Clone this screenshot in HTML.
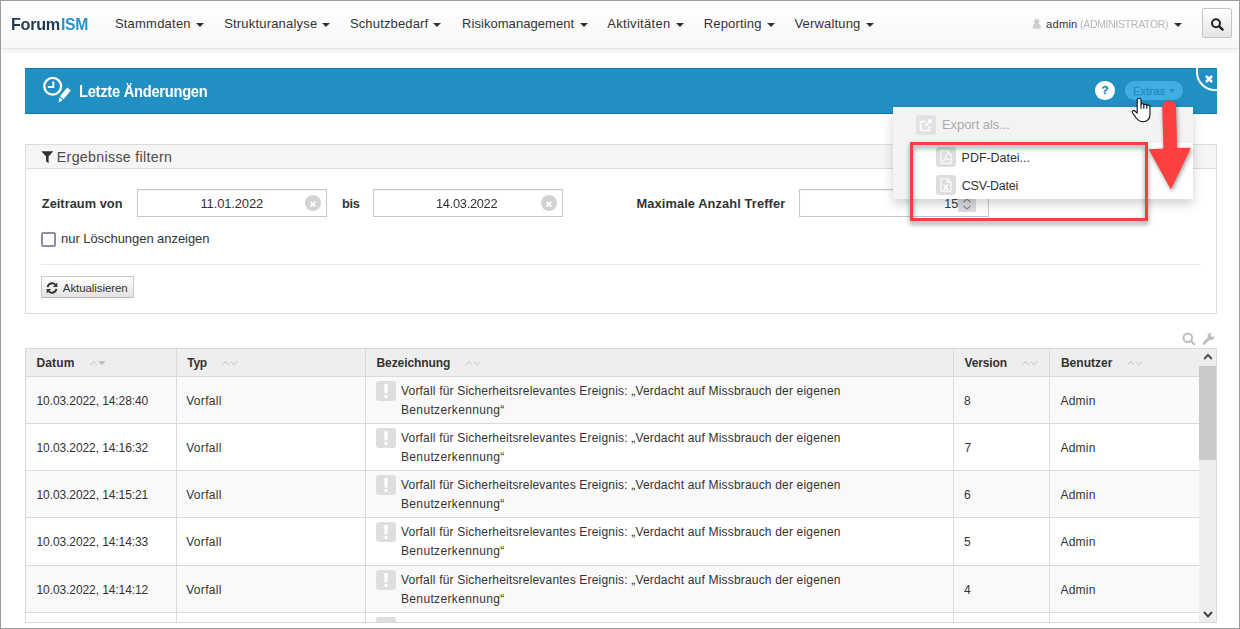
<!DOCTYPE html>
<html lang="de">
<head>
<meta charset="utf-8">
<title>ForumISM - Letzte Änderungen</title>
<style>
*{box-sizing:border-box;margin:0;padding:0}
html,body{width:1240px;height:629px;overflow:hidden;background:#fff}
body{font-family:"Liberation Sans",sans-serif;font-size:13px;color:#333;position:relative}
.a{position:absolute}
.t{position:absolute;white-space:nowrap;display:block}
svg{position:absolute;overflow:visible}
#frame{position:absolute;left:0;top:0;width:1240px;height:629px;border:1px solid #9b9b9b;z-index:100;pointer-events:none}
#nav{position:absolute;left:0;top:0;width:1240px;height:49px;background:linear-gradient(#ffffff,#f7f7f7);border-bottom:1px solid #e3e3e3;box-shadow:0 2px 5px rgba(0,0,0,.07)}
.caret{position:absolute;width:0;height:0;border-left:4px solid transparent;border-right:4px solid transparent;border-top:4px solid #333;top:23px}
#sbtn{position:absolute;left:1202px;top:8px;width:30px;height:30px;border:1px solid #c4c4c4;border-radius:2px;background:linear-gradient(#ffffff,#e4e4e4)}
#hdr{position:absolute;left:25px;top:68px;width:1192px;height:46px;background:#2090c2;border-top:1px solid #127aad;border-bottom:1px solid #127aad}
#closec{position:absolute;left:1196px;top:66px;width:24px;height:25px;border:2px solid #fff;border-radius:0 0 0 18px}
#help{position:absolute;left:1095px;top:81px;width:20px;height:19px;border-radius:10px;background:#fff}
#pill{position:absolute;left:1125px;top:81px;width:58px;height:19px;border-radius:10px;background:#3faee0}
#panel{position:absolute;left:25px;top:144px;width:1192px;height:170px;border:1px solid #dcdcdc;background:#fff}
#phead{position:absolute;left:0;top:0;width:1190px;height:24px;background:#f5f5f5;border-bottom:1px solid #dcdcdc}
.inp{position:absolute;top:189px;width:190px;height:28px;border:1px solid #c8c8c8;background:#fff;box-shadow:inset 0 1px 1px rgba(0,0,0,.06)}
.clr{position:absolute;top:195px;width:16px;height:16px;border-radius:50%;background:#d3d3d3}
#hr{position:absolute;left:41px;top:264px;width:1160px;height:1px;background:#e9e9e9}
#btn{position:absolute;left:41px;top:276px;width:93px;height:22px;border:1px solid #c9c9c9;border-bottom-color:#b9b9b9;border-radius:1px;background:linear-gradient(#ffffff,#e2e2e2)}
#cb{position:absolute;left:41px;top:232px;width:15px;height:15px;border:2px solid #8d8da3;border-radius:2px;background:#fff}
#tbl{position:absolute;left:25px;top:348px;width:1192px;height:275px;border:1px solid #dadada;background:#fff;overflow:hidden}
.th{position:absolute;top:0;height:28px;background:#eeeeee;border-right:1px solid #dadada;border-bottom:1px solid #dadada}
.row{position:absolute;left:0;width:1174px;border-bottom:1px solid #dadada;background:#fff}
.row.odd{background:#f9f9f9}
.vl{position:absolute;top:0;width:1px;height:275px;background:#dadada}
.ic{position:absolute;width:20px;height:20px;border-radius:3px;background:#dedede}
#dd{position:absolute;left:893px;top:107px;width:300px;height:92px;background:#f3f3f3;box-shadow:0 5px 10px rgba(0,0,0,.18)}
#ddh{position:absolute;left:0;top:0;width:300px;height:36px;background:#f3f3f3}
#red{position:absolute;left:910px;top:142px;width:238px;height:79px;border:3.4px solid #f83f3f;filter:drop-shadow(0 3px 2.5px rgba(0,0,0,.45))}
</style>
</head>
<body>
<!-- navbar -->
<div id="nav"></div>
<div class="caret" style="left:196px"></div>
<div class="caret" style="left:322px"></div>
<div class="caret" style="left:433px"></div>
<div class="caret" style="left:580px"></div>
<div class="caret" style="left:676px"></div>
<div class="caret" style="left:767px"></div>
<div class="caret" style="left:866px"></div>
<div class="caret" style="left:1174px;top:23px"></div>
<svg style="left:1032px;top:19px" width="10" height="10" viewBox="0 0 10 10"><circle cx="4.7" cy="2.7" r="2.6" fill="#cfcfcf"/><path d="M0.7 9.7 V7.2 C0.7 5.6 1.8 5 3.2 5 H6.2 C7.6 5 8.7 5.6 8.7 7.2 V9.7 Z" fill="#cfcfcf"/></svg>
<div id="sbtn"></div>
<svg style="left:1210px;top:17px" width="15" height="14" viewBox="0 0 15 14"><circle cx="6" cy="6.2" r="4" fill="none" stroke="#222" stroke-width="2"/><path d="M9 9.2 L12.6 12.6" stroke="#222" stroke-width="2.4" stroke-linecap="round"/></svg>

<!-- header bar -->
<div id="hdr"></div>
<svg style="left:40px;top:74px" width="36" height="32" viewBox="0 0 36 32">
<circle cx="12.7" cy="12.3" r="8.4" fill="none" stroke="#fff" stroke-width="2.3"/>
<path d="M13.3 7.4 V13 H7.8" fill="none" stroke="#fff" stroke-width="2"/>
<path d="M27.2 13.6 L30.8 16.6 L23.6 25.2 L20 22.2 Z" fill="#fff"/>
<path d="M19.3 23.2 L22.7 26 L18.6 28.6 Z" fill="#fff"/>
</svg>
<div id="help"></div>
<div id="pill"></div>
<div class="a" style="left:1169px;top:89px;width:0;height:0;border-left:3.5px solid transparent;border-right:3.5px solid transparent;border-top:4px solid #2492c8"></div>
<div class="a" style="left:1190px;top:60px;width:27px;height:40px;overflow:hidden"><div class="a" style="left:6px;top:6px;width:30px;height:25px;border:2px solid #fff;border-radius:0 0 0 19px"></div></div>
<svg style="left:1204px;top:74px" width="10" height="10" viewBox="0 0 10 10"><path d="M2 2 L8 8 M8 2 L2 8" stroke="#fff" stroke-width="2.6" stroke-linecap="butt"/></svg>

<!-- filter panel -->
<div id="panel"><div id="phead"></div></div>
<svg style="left:41px;top:151px" width="13" height="13" viewBox="0 0 13 13"><path d="M0.3 0.3 H12.3 L7.6 5.6 V12.3 L5 10.2 V5.6 Z" fill="#333"/></svg>
<div class="inp" style="left:137px"></div>
<div class="inp" style="left:373px"></div>
<div class="inp" style="left:799px"></div>
<div class="clr" style="left:305px"></div>
<svg style="left:309px;top:200px" width="8" height="8" viewBox="0 0 8 8"><path d="M1.6 1.8 L6.4 6.6 M6.4 1.8 L1.6 6.6" stroke="#fff" stroke-width="1.7"/></svg>
<div class="clr" style="left:541px"></div>
<svg style="left:545px;top:200px" width="8" height="8" viewBox="0 0 8 8"><path d="M1.6 1.8 L6.4 6.6 M6.4 1.8 L1.6 6.6" stroke="#fff" stroke-width="1.7"/></svg>
<div class="a" style="left:958px;top:190px;width:18px;height:22px;background:#dbdbe0"></div>
<svg style="left:961px;top:197px" width="12" height="14" viewBox="0 0 12 14"><path d="M2.5 5 L6 2 L9.5 5 M2.5 9 L6 12 L9.5 9" fill="none" stroke="#858596" stroke-width="1.2"/></svg>
<div id="cb"></div>
<div id="hr"></div>
<div id="btn"></div>
<svg style="left:46px;top:282px" width="12" height="12" viewBox="0 0 12 12">
<path d="M1.6 5.2 A4.5 4.5 0 0 1 9.4 2.8" fill="none" stroke="#333" stroke-width="1.9"/>
<path d="M11.3 0.6 V5 H6.9 Z" fill="#333"/>
<path d="M10.4 6.8 A4.5 4.5 0 0 1 2.6 9.2" fill="none" stroke="#333" stroke-width="1.9"/>
<path d="M0.7 11.4 V7 H5.1 Z" fill="#333"/>
</svg>

<!-- table tools -->
<svg style="left:1182px;top:332px" width="14" height="14" viewBox="0 0 14 14"><circle cx="5.8" cy="5.7" r="4.3" fill="none" stroke="#bdbdbd" stroke-width="2"/><path d="M9.2 9.2 L12.2 12.2" stroke="#bdbdbd" stroke-width="2.2" stroke-linecap="round"/></svg>
<svg style="left:1202px;top:332px" width="14" height="14" viewBox="0 0 14 14"><path d="M2.1 11.3 L7.8 5.6" stroke="#bdbdbd" stroke-width="3" stroke-linecap="round"/><path d="M12.6 3.9 A3.6 3.6 0 1 1 9.5 0.8 L8.3 3.3 L10.2 5.2 Z" fill="#bdbdbd"/></svg>

<!-- table -->
<div id="tbl">
<div class="th" style="left:0;width:151px"></div>
<div class="th" style="left:151px;width:189px"></div>
<div class="th" style="left:340px;width:588px"></div>
<div class="th" style="left:928px;width:96px"></div>
<div class="th" style="left:1024px;width:150px;border-right:none"></div>
<div class="row odd" style="top:28px;height:47px"></div>
<div class="row" style="top:75px;height:47px"></div>
<div class="row odd" style="top:122px;height:47px"></div>
<div class="row" style="top:169px;height:48px"></div>
<div class="row odd" style="top:217px;height:47px"></div>
<div class="row" style="top:264px;height:47px"></div>
<div class="vl" style="left:150px"></div>
<div class="vl" style="left:339px"></div>
<div class="vl" style="left:927px"></div>
<div class="vl" style="left:1023px"></div>
<div class="a" style="left:1173px;top:0;width:18px;height:275px;background:#eeeeee"></div>
<div class="a" style="left:1173px;top:17px;width:18px;height:94px;background:#c9c9c9"></div>
<svg style="left:1177px;top:4px" width="10" height="7" viewBox="0 0 10 7"><path d="M1.2 6 L5 1.8 L8.8 6" fill="none" stroke="#4a4a4a" stroke-width="1.9"/></svg>
<svg style="left:1177px;top:262px" width="10" height="7" viewBox="0 0 10 7"><path d="M1 1 L5 5.4 L9 1" fill="none" stroke="#444" stroke-width="2"/></svg>
</div>
<svg style="left:89.6px;top:360px" width="17" height="7" viewBox="0 0 17 7"><path d="M0.4 4.9 L3.8 1.5 L7.2 4.9" fill="none" stroke="#d2d2d2" stroke-width="1.2"/><path d="M8.2 1.2 H15.6 L11.9 5.2 Z" fill="#bcbcbc"/></svg>
<svg style="left:222.3px;top:360px" width="17" height="7" viewBox="0 0 17 7"><path d="M0.4 4.9 L3.8 1.5 L7.2 4.9" fill="none" stroke="#d2d2d2" stroke-width="1.2"/><path d="M8.6 1.4 L12 4.8 L15.4 1.4" fill="none" stroke="#d2d2d2" stroke-width="1.2"/></svg>
<svg style="left:465.1px;top:360px" width="17" height="7" viewBox="0 0 17 7"><path d="M0.4 4.9 L3.8 1.5 L7.2 4.9" fill="none" stroke="#d2d2d2" stroke-width="1.2"/><path d="M8.6 1.4 L12 4.8 L15.4 1.4" fill="none" stroke="#d2d2d2" stroke-width="1.2"/></svg>
<svg style="left:1021.8px;top:360px" width="17" height="7" viewBox="0 0 17 7"><path d="M0.4 4.9 L3.8 1.5 L7.2 4.9" fill="none" stroke="#d2d2d2" stroke-width="1.2"/><path d="M8.6 1.4 L12 4.8 L15.4 1.4" fill="none" stroke="#d2d2d2" stroke-width="1.2"/></svg>
<svg style="left:1126.8px;top:360px" width="17" height="7" viewBox="0 0 17 7"><path d="M0.4 4.9 L3.8 1.5 L7.2 4.9" fill="none" stroke="#d2d2d2" stroke-width="1.2"/><path d="M8.6 1.4 L12 4.8 L15.4 1.4" fill="none" stroke="#d2d2d2" stroke-width="1.2"/></svg>
<div class="ic" style="left:376px;top:381px;height:20px;border-radius:3px"></div>
<svg style="left:383px;top:381px" width="6" height="20" viewBox="0 0 6 20"><path d="M1.1 3.2 H4.9 L4.3 12.4 H1.7 Z" fill="#fff"/><rect x="1.4" y="13.9" width="3.2" height="3.1" rx="0.8" fill="#fff"/></svg>
<div class="ic" style="left:376px;top:428px;height:20px;border-radius:3px"></div>
<svg style="left:383px;top:428px" width="6" height="20" viewBox="0 0 6 20"><path d="M1.1 3.2 H4.9 L4.3 12.4 H1.7 Z" fill="#fff"/><rect x="1.4" y="13.9" width="3.2" height="3.1" rx="0.8" fill="#fff"/></svg>
<div class="ic" style="left:376px;top:475px;height:20px;border-radius:3px"></div>
<svg style="left:383px;top:475px" width="6" height="20" viewBox="0 0 6 20"><path d="M1.1 3.2 H4.9 L4.3 12.4 H1.7 Z" fill="#fff"/><rect x="1.4" y="13.9" width="3.2" height="3.1" rx="0.8" fill="#fff"/></svg>
<div class="ic" style="left:376px;top:522px;height:20px;border-radius:3px"></div>
<svg style="left:383px;top:522px" width="6" height="20" viewBox="0 0 6 20"><path d="M1.1 3.2 H4.9 L4.3 12.4 H1.7 Z" fill="#fff"/><rect x="1.4" y="13.9" width="3.2" height="3.1" rx="0.8" fill="#fff"/></svg>
<div class="ic" style="left:376px;top:570px;height:20px;border-radius:3px"></div>
<svg style="left:383px;top:570px" width="6" height="20" viewBox="0 0 6 20"><path d="M1.1 3.2 H4.9 L4.3 12.4 H1.7 Z" fill="#fff"/><rect x="1.4" y="13.9" width="3.2" height="3.1" rx="0.8" fill="#fff"/></svg>
<div class="ic" style="left:376px;top:617px;height:5px;border-radius:3px 3px 0 0"></div>

<!-- dropdown -->
<div id="dd"><div id="ddh"></div><div class="a" style="left:18px;top:36px;width:282px;height:56px;background:#fff"></div></div>
<div class="ic" style="left:916px;top:115px;background:#e2e2e2"></div>
<svg style="left:919px;top:118px" width="14" height="14" viewBox="0 0 14 14"><path d="M10.5 8 V11.3 A1.2 1.2 0 0 1 9.3 12.5 H2.7 A1.2 1.2 0 0 1 1.5 11.3 V4.7 A1.2 1.2 0 0 1 2.7 3.5 H6.5" fill="none" stroke="#fff" stroke-width="1.5"/><path d="M8 1.2 H12.8 V6 L11 4.2 L7 8.2 L5.8 7 L9.8 3 Z" fill="#fff"/></svg>
<div class="ic" style="left:936px;top:147px"></div>
<svg style="left:940px;top:150px" width="12" height="14" viewBox="0 0 12 14"><path d="M1 0.7 H7.5 L11 4.2 V13.3 H1 Z M7.5 0.7 V4.2 H11" fill="none" stroke="#fff" stroke-width="1.1"/><path d="M2.6 11.2 C4.8 9.6 6 6.6 5.6 4.6 C5.2 6.8 7 9 9.6 9.4 C7 9.2 4.4 10 2.6 11.2 Z" fill="none" stroke="#fff" stroke-width="0.9"/></svg>
<div class="ic" style="left:936px;top:175px"></div>
<svg style="left:940px;top:178px" width="12" height="14" viewBox="0 0 12 14"><path d="M1 0.7 H7.5 L11 4.2 V13.3 H1 Z M7.5 0.7 V4.2 H11" fill="none" stroke="#fff" stroke-width="1.1"/><path d="M3.6 6.6 L8 12 M8 6.6 L3.6 12" fill="none" stroke="#fff" stroke-width="1.5"/></svg>

<span class="t" style="left:11.00px;top:14.91px;font-size:17px;line-height:20.40px;color:#1f3b50;letter-spacing:-0.300px;font-weight:bold;transform:scaleX(0.9517);transform-origin:0 50%;">Forum</span>
<span class="t" style="left:61.40px;top:14.91px;font-size:17px;line-height:20.40px;color:#2a93c9;letter-spacing:-0.300px;font-weight:bold;transform:scaleX(0.9252);transform-origin:0 50%;">ISM</span>
<span class="t" style="left:114.90px;top:15.70px;font-size:13px;line-height:15.60px;color:#333;letter-spacing:0.222px;">Stammdaten</span>
<span class="t" style="left:224.20px;top:15.70px;font-size:13px;line-height:15.60px;color:#333;letter-spacing:0.186px;">Strukturanalyse</span>
<span class="t" style="left:349.90px;top:15.70px;font-size:13px;line-height:15.60px;color:#333;letter-spacing:0.155px;">Schutzbedarf</span>
<span class="t" style="left:462.00px;top:15.70px;font-size:13px;line-height:15.60px;color:#333;letter-spacing:0.053px;">Risikomanagement</span>
<span class="t" style="left:607.20px;top:15.70px;font-size:13px;line-height:15.60px;color:#333;letter-spacing:0.310px;">Aktivitäten</span>
<span class="t" style="left:703.80px;top:15.70px;font-size:13px;line-height:15.60px;color:#333;letter-spacing:0.150px;">Reporting</span>
<span class="t" style="left:794.50px;top:15.70px;font-size:13px;line-height:15.60px;color:#333;letter-spacing:0.167px;">Verwaltung</span>
<span class="t" style="left:1046.10px;top:18.20px;font-size:11.2px;line-height:13.44px;color:#333;letter-spacing:0.175px;">admin</span>
<span class="t" style="left:1079.90px;top:17.51px;font-size:11.4px;line-height:13.68px;color:#b8b8b8;letter-spacing:-0.300px;transform:scaleX(0.9163);transform-origin:0 50%;">(ADMINISTRATOR)</span>
<span class="t" style="left:78.90px;top:83.05px;font-size:15.8px;line-height:18.96px;color:#fff;letter-spacing:-0.300px;font-weight:bold;transform:scaleX(0.9313);transform-origin:0 50%;">Letzte Änderungen</span>
<span class="t" style="left:1133.00px;top:85.29px;font-size:11px;line-height:13.20px;color:#238fc5;letter-spacing:0.160px;-webkit-text-stroke:0.35px #238fc5;">Extras</span>
<span class="t" style="left:1101.60px;top:84.32px;font-size:11.5px;line-height:13.80px;color:#1c87ba;letter-spacing:0.000px;font-weight:bold;-webkit-text-stroke:0.3px #1c87ba;">?</span>
<span class="t" style="left:942.00px;top:116.70px;font-size:13px;line-height:15.60px;color:#aaa;letter-spacing:-0.067px;">Export als...</span>
<span class="t" style="left:961.60px;top:150.77px;font-size:12.5px;line-height:15.00px;color:#333;letter-spacing:-0.036px;">PDF-Datei...</span>
<span class="t" style="left:961.80px;top:178.57px;font-size:12.5px;line-height:15.00px;color:#333;letter-spacing:-0.225px;">CSV-Datei</span>
<span class="t" style="left:56.80px;top:148.96px;font-size:14.2px;line-height:17.04px;color:#4a4a4a;letter-spacing:0.329px;">Ergebnisse filtern</span>
<span class="t" style="left:41.80px;top:195.88px;font-size:12.8px;line-height:15.36px;color:#333;letter-spacing:0.027px;font-weight:bold;">Zeitraum von</span>
<span class="t" style="left:342.00px;top:195.88px;font-size:12.8px;line-height:15.36px;color:#333;letter-spacing:-0.300px;font-weight:bold;">bis</span>
<span class="t" style="left:636.50px;top:195.88px;font-size:12.8px;line-height:15.36px;color:#333;letter-spacing:0.118px;font-weight:bold;">Maximale Anzahl Treffer</span>
<span class="t" style="left:200.50px;top:195.70px;font-size:13px;line-height:15.60px;color:#333;letter-spacing:-0.156px;">11.01.2022</span>
<span class="t" style="left:436.40px;top:195.70px;font-size:13px;line-height:15.60px;color:#333;letter-spacing:-0.300px;transform:scaleX(0.9872);transform-origin:0 50%;">14.03.2022</span>
<span class="t" style="left:944.20px;top:197.17px;font-size:12.5px;line-height:15.00px;color:#333;letter-spacing:0.000px;">15</span>
<span class="t" style="left:61.10px;top:230.60px;font-size:13px;line-height:15.60px;color:#333;letter-spacing:-0.055px;">nur Löschungen anzeigen</span>
<span class="t" style="left:62.80px;top:282.02px;font-size:11.5px;line-height:13.80px;color:#333;letter-spacing:-0.075px;">Aktualisieren</span>
<span class="t" style="left:36.50px;top:355.64px;font-size:12px;line-height:14.40px;color:#333;letter-spacing:0.125px;font-weight:bold;">Datum</span>
<span class="t" style="left:187.30px;top:355.64px;font-size:12px;line-height:14.40px;color:#333;letter-spacing:-0.300px;font-weight:bold;">Typ</span>
<span class="t" style="left:376.50px;top:355.64px;font-size:12px;line-height:14.40px;color:#333;letter-spacing:-0.090px;font-weight:bold;">Bezeichnung</span>
<span class="t" style="left:964.60px;top:355.64px;font-size:12px;line-height:14.40px;color:#333;letter-spacing:-0.150px;font-weight:bold;">Version</span>
<span class="t" style="left:1060.90px;top:355.64px;font-size:12px;line-height:14.40px;color:#333;letter-spacing:0.029px;font-weight:bold;">Benutzer</span>
<span class="t" style="left:36.50px;top:393.74px;font-size:12px;line-height:14.40px;color:#333;letter-spacing:-0.089px;">10.03.2022, 14:28:40</span>
<span class="t" style="left:186.20px;top:393.74px;font-size:12px;line-height:14.40px;color:#333;letter-spacing:0.317px;">Vorfall</span>
<span class="t" style="left:401.00px;top:384.14px;font-size:12px;line-height:14.40px;color:#333;letter-spacing:0.184px;">Vorfall für Sicherheitsrelevantes Ereignis: „Verdacht auf Missbrauch der eigenen</span>
<span class="t" style="left:401.00px;top:402.74px;font-size:12px;line-height:14.40px;color:#333;letter-spacing:0.347px;">Benutzerkennung“</span>
<span class="t" style="left:963.90px;top:393.74px;font-size:12px;line-height:14.40px;color:#333;letter-spacing:0.000px;">8</span>
<span class="t" style="left:1060.40px;top:393.74px;font-size:12px;line-height:14.40px;color:#333;letter-spacing:0.250px;">Admin</span>
<span class="t" style="left:36.50px;top:440.84px;font-size:12px;line-height:14.40px;color:#333;letter-spacing:-0.089px;">10.03.2022, 14:16:32</span>
<span class="t" style="left:186.20px;top:440.84px;font-size:12px;line-height:14.40px;color:#333;letter-spacing:0.317px;">Vorfall</span>
<span class="t" style="left:401.00px;top:431.24px;font-size:12px;line-height:14.40px;color:#333;letter-spacing:0.184px;">Vorfall für Sicherheitsrelevantes Ereignis: „Verdacht auf Missbrauch der eigenen</span>
<span class="t" style="left:401.00px;top:449.84px;font-size:12px;line-height:14.40px;color:#333;letter-spacing:0.347px;">Benutzerkennung“</span>
<span class="t" style="left:964.40px;top:440.84px;font-size:12px;line-height:14.40px;color:#333;letter-spacing:0.000px;">7</span>
<span class="t" style="left:1060.40px;top:440.84px;font-size:12px;line-height:14.40px;color:#333;letter-spacing:0.250px;">Admin</span>
<span class="t" style="left:36.50px;top:487.84px;font-size:12px;line-height:14.40px;color:#333;letter-spacing:-0.089px;">10.03.2022, 14:15:21</span>
<span class="t" style="left:186.20px;top:487.84px;font-size:12px;line-height:14.40px;color:#333;letter-spacing:0.317px;">Vorfall</span>
<span class="t" style="left:401.00px;top:478.24px;font-size:12px;line-height:14.40px;color:#333;letter-spacing:0.184px;">Vorfall für Sicherheitsrelevantes Ereignis: „Verdacht auf Missbrauch der eigenen</span>
<span class="t" style="left:401.00px;top:496.84px;font-size:12px;line-height:14.40px;color:#333;letter-spacing:0.347px;">Benutzerkennung“</span>
<span class="t" style="left:963.90px;top:487.84px;font-size:12px;line-height:14.40px;color:#333;letter-spacing:0.000px;">6</span>
<span class="t" style="left:1060.40px;top:487.84px;font-size:12px;line-height:14.40px;color:#333;letter-spacing:0.250px;">Admin</span>
<span class="t" style="left:36.50px;top:535.44px;font-size:12px;line-height:14.40px;color:#333;letter-spacing:-0.089px;">10.03.2022, 14:14:33</span>
<span class="t" style="left:186.20px;top:535.44px;font-size:12px;line-height:14.40px;color:#333;letter-spacing:0.317px;">Vorfall</span>
<span class="t" style="left:401.00px;top:525.24px;font-size:12px;line-height:14.40px;color:#333;letter-spacing:0.184px;">Vorfall für Sicherheitsrelevantes Ereignis: „Verdacht auf Missbrauch der eigenen</span>
<span class="t" style="left:401.00px;top:544.44px;font-size:12px;line-height:14.40px;color:#333;letter-spacing:0.347px;">Benutzerkennung“</span>
<span class="t" style="left:963.90px;top:535.44px;font-size:12px;line-height:14.40px;color:#333;letter-spacing:0.000px;">5</span>
<span class="t" style="left:1060.40px;top:535.44px;font-size:12px;line-height:14.40px;color:#333;letter-spacing:0.250px;">Admin</span>
<span class="t" style="left:36.50px;top:582.74px;font-size:12px;line-height:14.40px;color:#333;letter-spacing:-0.089px;">10.03.2022, 14:14:12</span>
<span class="t" style="left:186.20px;top:582.74px;font-size:12px;line-height:14.40px;color:#333;letter-spacing:0.317px;">Vorfall</span>
<span class="t" style="left:401.00px;top:573.14px;font-size:12px;line-height:14.40px;color:#333;letter-spacing:0.184px;">Vorfall für Sicherheitsrelevantes Ereignis: „Verdacht auf Missbrauch der eigenen</span>
<span class="t" style="left:401.00px;top:591.74px;font-size:12px;line-height:14.40px;color:#333;letter-spacing:0.347px;">Benutzerkennung“</span>
<span class="t" style="left:963.90px;top:582.74px;font-size:12px;line-height:14.40px;color:#333;letter-spacing:0.000px;">4</span>
<span class="t" style="left:1060.40px;top:582.74px;font-size:12px;line-height:14.40px;color:#333;letter-spacing:0.250px;">Admin</span>

<!-- annotations -->
<div id="red"></div>
<svg style="left:1140px;top:95px;filter:drop-shadow(1.5px 2px 2px rgba(0,0,0,.4))" width="60" height="100" viewBox="0 0 60 100"><path d="M22.2 11.2 A7 7 0 0 1 36 11.2 L37.1 52.9 L51 52.7 L30.9 94.5 L8.7 54.3 L23.4 53.4 Z" fill="#fb4040"/></svg>
<svg style="left:1125px;top:92px" width="35" height="35" viewBox="0 0 35 35"><path d="M12.2 8 C12.2 5.6 16 5.6 16 8 V12.2 C16.6 11.4 18.8 11.6 18.8 12.8 C19.6 12 21.8 12.2 21.8 13.4 C22.8 12.8 25 13.2 25 15 V22 C25 27 22 29.7 17.8 29.7 C14 29.7 12.6 27.6 11 25.6 L7.6 21 C6.4 19.4 8.4 17.6 9.8 19 L12.2 21.2 Z" fill="#fff" stroke="#111" stroke-width="1.1" stroke-linejoin="round"/><path d="M16 12 V16.8 M18.8 12.8 V16.8 M21.8 13.6 V16.8" stroke="#111" stroke-width="1.1" fill="none"/></svg>

<div id="frame"></div>
</body>
</html>
